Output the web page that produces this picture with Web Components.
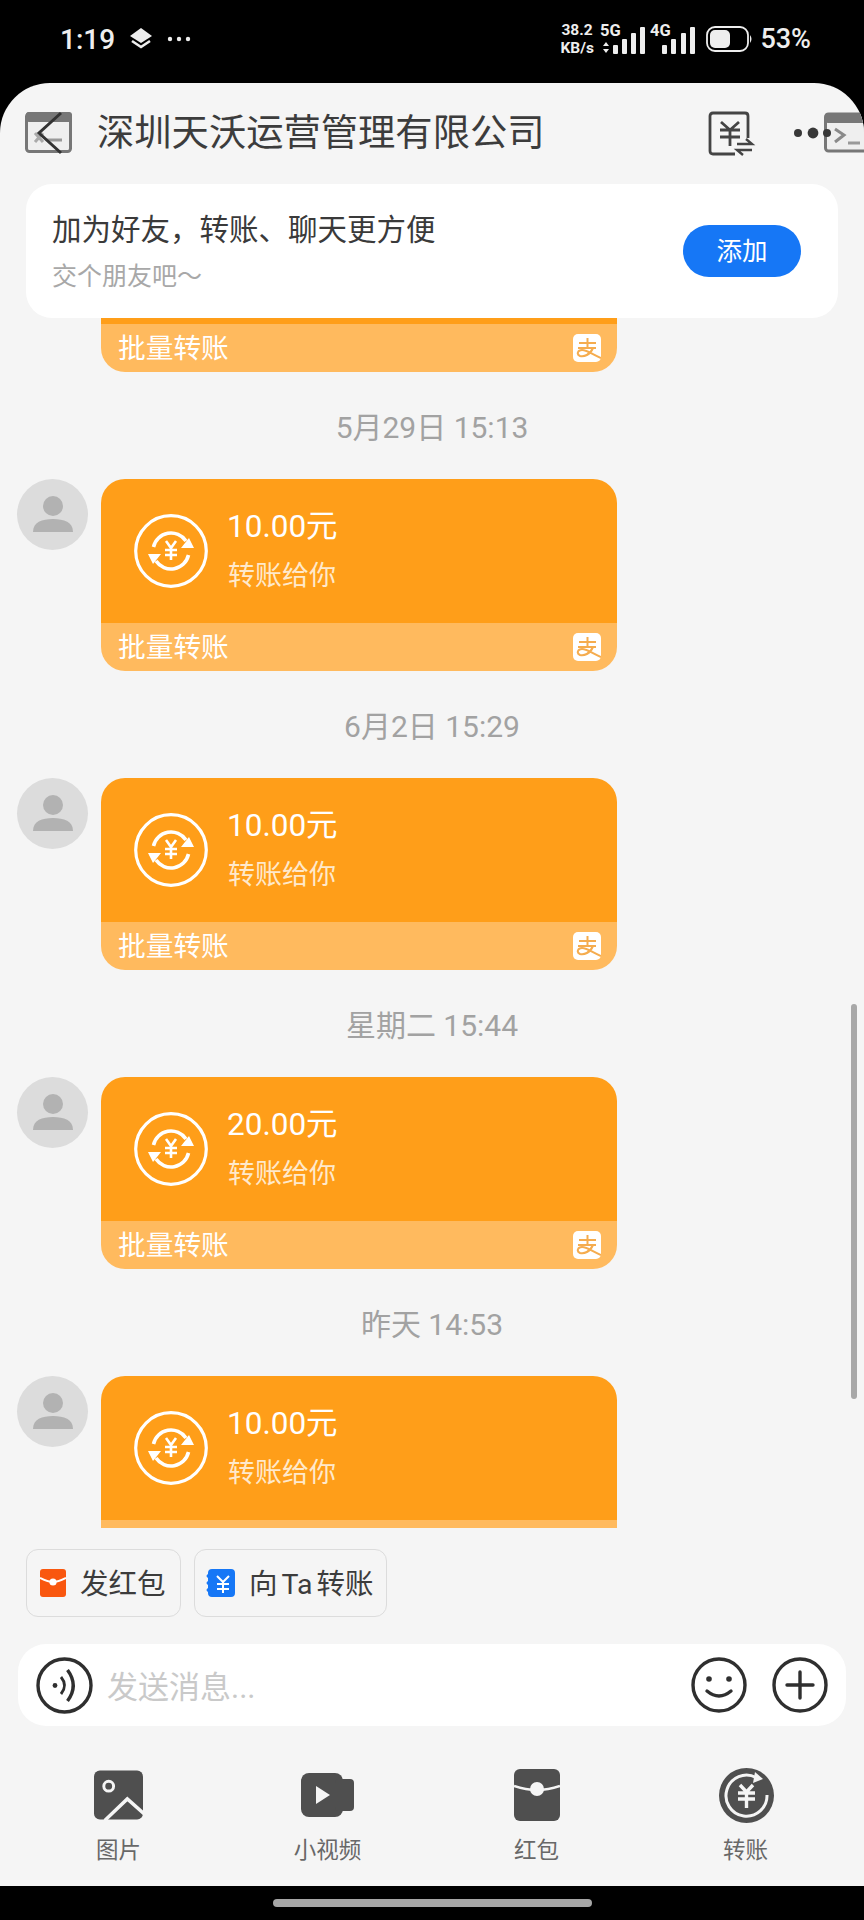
<!DOCTYPE html>
<html lang="zh"><head><meta charset="utf-8"><title>chat</title>
<style>
html,body{margin:0;padding:0;background:#000}
body{width:864px;height:1920px;overflow:hidden;font-family:Roboto,"Noto Sans CJK SC",sans-serif}
</style></head><body>
<phone-screen>
  <status-bar></status-bar>
  <chat-window>
    <chat-header title-text="深圳天沃运营管理有限公司"></chat-header>
    <friend-card></friend-card>
    <chat-list>
      <transfer-msg part="tail"></transfer-msg>
      <time-label>5月29日 15:13</time-label>
      <transfer-msg amount="10.00元"></transfer-msg>
      <time-label>6月2日 15:29</time-label>
      <transfer-msg amount="10.00元"></transfer-msg>
      <time-label>星期二 15:44</time-label>
      <transfer-msg amount="20.00元"></transfer-msg>
      <time-label>昨天 14:53</time-label>
      <transfer-msg part="head" amount="10.00元"></transfer-msg>
    </chat-list>
    <quick-chips></quick-chips>
    <input-bar></input-bar>
    <tool-tray></tool-tray>
  </chat-window>
  <home-bar></home-bar>
</phone-screen>
<script>
function def(name, html, init){
  customElements.define(name, class extends HTMLElement{
    constructor(){super();this.attachShadow({mode:'open'}).innerHTML=html;}
    connectedCallback(){ if(init) init(this,this.shadowRoot); }
  });
}
const FONT='Roboto,"Noto Sans CJK SC",sans-serif';
def('phone-screen',`<style>:host{display:flex;flex-direction:column;width:864px;height:1920px;background:#000;color:#333;font-family:${FONT}}</style><slot></slot>`);

def('status-bar',`<style>
:host{display:flex;align-items:center;height:83px;box-sizing:border-box;padding:0 53px 5px 60px;color:#eee;flex:none}
.t{font-size:28px;font-weight:500;width:69px}
.sp{flex:1}
.net{display:grid;font-size:15.500px;font-weight:700;line-height:15px;width:39px;text-align:left}
svg{display:block}
.pc{font-size:27px;font-weight:500;margin-left:7px}
</style>
<span class="t">1:19</span>
<svg width="24" height="24" viewBox="0 0 24 24"><path d="M12 1 23 9 12 16 1 9Z" fill="#eee"/><path d="M3 14 12 20 21 14" fill="none" stroke="#eee" stroke-width="2.600"/></svg>
<svg width="26" height="8" viewBox="0 0 26 8" style="margin-left:13px"><circle cx="4" cy="4" r="2.200" fill="#eee"/><circle cx="13" cy="4" r="2.200" fill="#eee"/><circle cx="22" cy="4" r="2.200" fill="#eee"/></svg>
<span class="sp"></span>
<span class="net"><span>38.2</span><span style="margin-top:3px;margin-left:-1px">KB/s</span></span>
<svg width="96" height="38" viewBox="0 -6 96 38" style="margin-top:-4px"><text x="0" y="12" font-size="16.500" font-weight="700" fill="#eee" font-family="Roboto">5G</text>
<path d="M3 22 6 18 9 22ZM3 25 6 29 9 25Z" fill="#eee"/>
<g fill="#eee"><rect x="13" y="21" width="5" height="9" rx="1"/><rect x="22" y="15" width="5" height="15" rx="1"/><rect x="31" y="9" width="5" height="21" rx="1"/><rect x="40" y="3" width="5" height="27" rx="1"/>
<rect x="62" y="21" width="5" height="9" rx="1"/><rect x="71" y="15" width="5" height="15" rx="1"/><rect x="81" y="9" width="5" height="21" rx="1"/><rect x="90" y="3" width="5" height="27" rx="1"/></g>
<text x="50" y="12" font-size="16.500" font-weight="700" fill="#eee" font-family="Roboto">4G</text></svg>
<svg width="47" height="26" viewBox="0 0 47 26" style="margin-left:10px"><rect x="1" y="1" width="41" height="24" rx="8" fill="none" stroke="#eee" stroke-width="1.800"/><rect x="4" y="4" width="20" height="18" rx="5" fill="#eee"/><path d="M44 9q3 4 0 8Z" fill="#eee"/></svg>
<span class="pc">53%</span>`);

def('chat-window',`<style>:host{display:flex;flex-direction:column;position:relative;height:1803px;flex:none;background:#f5f5f5;border-radius:50px 50px 0 0;overflow:hidden}
.bar{position:absolute;right:7px;top:921px;width:6px;height:395px;border-radius:3px;background:#a8a8a8}</style><slot></slot><div class="bar"></div>`);

def('chat-header',`<style>
:host{display:flex;align-items:center;height:101px;flex:none;position:relative;box-sizing:border-box;padding:0 0 0 25px}
h1{margin:0 0 0 24px;font-size:37.300px;font-weight:400;color:#3c3c3c;line-height:1;flex:1;white-space:nowrap}
svg{display:block;flex:none}
.rc{position:absolute;left:708px;top:28px}
.term{position:absolute;left:824px;top:29px}
.dots{position:absolute;left:792px;top:42px}
</style>
<svg width="48" height="44" viewBox="0 0 48 44" style="margin-top:-1px">
<rect x="1.500" y="2.500" width="44" height="38" rx="3" fill="#efefef" stroke="#777" stroke-width="3"/><rect x="1" y="1" width="46" height="10" rx="3" fill="#777"/>
<path d="M10 22 18 31M18 22 10 31" stroke="#aaa" stroke-width="3"/><path d="M22 29H37" stroke="#999" stroke-width="3"/>
<path d="M36 2 14 22 36 42" fill="none" stroke="#333" stroke-width="3"/></svg>
<h1></h1>
<svg class="rc" width="48" height="48" viewBox="0 0 48 48">
<path d="M27 43H5Q2 43 2 40V5Q2 2 5 2H37Q40 2 40 5V27" fill="none" stroke="#444" stroke-width="2.800"/>
<path d="M13 11 22 19 31 11M12 19H32M12 26H32M22 19V35" fill="none" stroke="#444" stroke-width="2.800"/>
<path d="M29 33H44L38 28M44 39H29L35 44" fill="none" stroke="#444" stroke-width="2.400"/></svg>
<svg class="term" width="40" height="41" viewBox="0 0 40 41"><rect x="1.500" y="2" width="50" height="37" rx="3" fill="#efefef" stroke="#777" stroke-width="3"/><rect x="1" y="1" width="50" height="10" rx="3" fill="#777"/><path d="M11 17 20 23 11 30" fill="none" stroke="#8a8a8a" stroke-width="3"/><path d="M24 31H36" stroke="#999" stroke-width="3"/></svg>
<svg class="dots" width="42" height="16" viewBox="0 0 42 16"><circle cx="6" cy="8" r="4" fill="#383838"/><circle cx="21" cy="8" r="5.400" fill="#383838"/><circle cx="35" cy="8" r="4" fill="#383838"/></svg>`,
(el,s)=>{s.querySelector('h1').textContent=el.getAttribute('title-text')});

def('friend-card',`<style>
:host{display:flex;align-items:center;height:134px;flex:none;box-sizing:border-box;margin:0 26px;padding:0 37px 0 26px;background:#fff;border-radius:26px}
.c{flex:1;display:flex;flex-direction:column;padding-top:2px}
.a{font-size:29.500px;line-height:40px;color:#3a3a3a}
.b{font-size:25px;line-height:34px;color:#a8a8a8;margin-top:10px}
.btn{width:118px;height:52px;border-radius:26px;background:#1677f6;color:#fff;font-size:25.500px;line-height:52px;display:flex;justify-content:center;box-sizing:border-box}
</style><div class="c"><span class="a">加为好友，转账、聊天更方便</span><span class="b">交个朋友吧～</span></div><div class="btn">添加</div>`);

def('chat-list',`<style>:host{display:flex;flex-direction:column;height:1211px;flex:none;overflow:hidden}</style><slot></slot>`);

def('time-label',`<style>:host{display:flex;justify-content:center;align-items:center;height:107px;box-sizing:border-box;font-size:30px;color:#a2a2a2;flex:none;padding-bottom:2px}</style><slot></slot>`);

const ZHI=`<svg width="28" height="28" viewBox="0 0 28 28"><rect width="28" height="28" rx="5" fill="#fff"/>
<path d="M6 9H23M14.500 4V14M5 14H23" fill="none" stroke="#f5ac4e" stroke-width="2"/>
<path d="M20 14C17 21 11 23 7 22 3 20 5 16 9 16 14 16 19 20 28 24" fill="none" stroke="#f5ac4e" stroke-width="2"/></svg>`;
const COIN=`<svg width="74" height="74" viewBox="0 0 74 74"><circle cx="37" cy="37" r="35.300" fill="none" stroke="#fff" stroke-width="3.200"/>
<path d="M19.500 33A18 18 0 0 1 52 27M54.500 41A18 18 0 0 1 22 47" fill="none" stroke="#fff" stroke-width="3.600"/>
<path d="M47 34H60L55 24ZM27 40H14L19 50Z" fill="#fff"/>
<path d="M32 27 37 34 42 27M31 36H43M31 41H43M37 34V46" fill="none" stroke="#fff" stroke-width="2.600"/></svg>`;
def('transfer-msg',`<style>
:host{display:flex;flex:none;padding-left:17px}
.av{width:71px;height:71px;border-radius:50%;background:#dcdcdc;flex:none;display:flex;align-items:center;justify-content:center}
.gap{width:71px;flex:none}
.bub{margin-left:13px;width:516px;border-radius:24px;overflow:hidden;display:flex;flex-direction:column;color:#fff}
.top{height:144px;background:#ff9e19;display:flex;align-items:center;padding-left:33px;box-sizing:border-box}
.tx{margin-left:20px;display:flex;flex-direction:column;align-self:flex-start;padding-top:28px}
.am{font-size:31.500px;line-height:40px;margin-left:-1px}
.su{font-size:27px;line-height:36px;margin-top:11px;color:#ffe9cb}
.ft{height:48px;background:#ffba5e;display:flex;align-items:center;justify-content:space-between;padding:0 16px 0 17px;font-size:27.700px}
.ft span{margin-top:-4px}
svg{display:block}
</style>
<div class="av"><svg width="42" height="42" viewBox="0 0 42 42"><circle cx="21" cy="12" r="10" fill="#b2b2b2"/><path d="M1 38C1 28 10 25 21 25S41 28 41 38Z" fill="#b2b2b2"/></svg></div>
<div class="bub"><div class="top">${COIN}<div class="tx"><span class="am"></span><span class="su">转账给你</span></div></div>
<div class="ft"><span>批量转账</span>${ZHI}</div></div>`,
(el,s)=>{
 const p=el.getAttribute('part');
 const top=s.querySelector('.top'),ft=s.querySelector('.ft'),bub=s.querySelector('.bub');
 s.querySelector('.am').textContent=el.getAttribute('amount')||'';
 if(p==='tail'){ // only the foot of this bubble has scrolled into view
   s.querySelector('.av').className='gap'; s.querySelector('.gap').innerHTML='';
   top.innerHTML=''; top.style.height='6px';
   bub.style.borderRadius='0 0 24px 24px';
 }
 if(p==='head'){ // the foot of this bubble is still below the fold
   ft.innerHTML=''; ft.style.height='8px';
   bub.style.borderRadius='24px 24px 0 0';
 }
});

def('quick-chips',`<style>
:host{display:flex;gap:13px;height:115px;flex:none;box-sizing:border-box;padding:20px 0 0 26px}
.c{height:68px;box-sizing:border-box;border:1.500px solid #dcdcdc;border-radius:12px;display:flex;align-items:center;padding:0 0 3px 13px;font-size:28.500px;color:#3c3c3c;gap:14px}
svg{display:block;flex:none;margin-top:3px}
</style>
<div class="c" style="width:155px"><svg width="26" height="28" viewBox="0 0 26 28"><rect width="26" height="28" rx="3" fill="#f9570f"/><path d="M0 9Q8 13 13 13T26 9" fill="none" stroke="#fff" stroke-width="2"/><circle cx="13" cy="13" r="3.600" fill="#fff"/></svg><span>发红包</span></div>
<div class="c" style="width:193px;padding-left:10px;gap:14px"><svg width="30" height="28" viewBox="0 0 30 28"><path d="M7 0H26Q30 0 30 4V24Q30 28 26 28H7Q3 28 3 24V23Q0 21 3 19V16Q0 14 3 12V9Q0 7 3 5V4Q3 0 7 0Z" fill="#1677f6"/><path d="M12 7 18 13 24 7M12 15H24M12 20H24M18 13V24" fill="none" stroke="#fff" stroke-width="2"/></svg><span style="white-space:nowrap;word-spacing:-3px">向 Ta 转账</span></div>`);

def('input-bar',`<style>
:host{display:flex;align-items:center;flex:none;height:82px;margin:0 18px;padding:0 18px 0 18px;box-sizing:border-box;background:#fff;border-radius:28px}
svg{display:block;flex:none}
span{flex:1;margin-left:14px;font-size:31px;color:#c9c9c9;padding-bottom:2px}
</style>
<svg width="57" height="57" viewBox="0 0 57 57"><circle cx="28.500" cy="28.500" r="26.500" fill="none" stroke="#2f2f2f" stroke-width="3.400"/><circle cx="19" cy="28.500" r="2.400" fill="#2f2f2f"/><path d="M25 20Q32 28.500 25 37" fill="none" stroke="#2f2f2f" stroke-width="2.800"/><path d="M31.500 13Q43 28.500 31.500 44" fill="none" stroke="#2f2f2f" stroke-width="3.400"/></svg>
<span>发送消息...</span>
<svg width="56" height="56" viewBox="0 0 56 56"><circle cx="28" cy="28" r="26" fill="none" stroke="#2f2f2f" stroke-width="3.400"/><circle cx="18" cy="22" r="2.800" fill="#2f2f2f"/><circle cx="38" cy="22" r="2.800" fill="#2f2f2f"/><path d="M16 34Q28 44 40 34" fill="none" stroke="#2f2f2f" stroke-width="3.400" stroke-linecap="round"/></svg>
<svg width="56" height="56" viewBox="0 0 56 56" style="margin-left:25px"><circle cx="28" cy="28" r="26" fill="none" stroke="#2f2f2f" stroke-width="3.400"/><path d="M15 28H41M28 15V41" stroke="#2f2f2f" stroke-width="3.400" stroke-linecap="round"/></svg>`);

def('tool-tray',`<style>
:host{display:grid;grid-template-columns:repeat(4,209px);flex:none;padding:41px 0 0 14px}
.i{display:flex;flex-direction:column;align-items:center;font-size:22.500px;color:#686868}
.g{height:56px;display:flex;align-items:center}
.i span{margin-top:11px;line-height:32px}
svg{display:block}
</style>
<div class="i"><div class="g"><svg width="49" height="50" viewBox="0 0 50 50"><rect width="50" height="50" rx="6" fill="#4f4f4f"/><circle cx="15" cy="16" r="5" fill="none" stroke="#f5f5f5" stroke-width="3"/><path d="M11 51 34 29 51 44" fill="none" stroke="#f5f5f5" stroke-width="3.500"/></svg></div><span>图片</span></div>
<div class="i"><div class="g"><svg width="53" height="44" viewBox="0 0 53 44"><rect width="42" height="44" rx="8" fill="#4f4f4f"/><rect x="34" y="6" width="19" height="32" rx="4" fill="#4f4f4f"/><path d="M15 13 29 22 15 31Z" fill="#f5f5f5"/></svg></div><span>小视频</span></div>
<div class="i"><div class="g"><svg width="46" height="52" viewBox="0 0 46 52"><rect width="46" height="52" rx="6" fill="#4f4f4f"/><path d="M0 17Q12 21 23 21T46 17" fill="none" stroke="#f5f5f5" stroke-width="2.500"/><circle cx="23" cy="20" r="7" fill="#f5f5f5"/></svg></div><span>红包</span></div>
<div class="i"><div class="g"><svg width="55" height="55" viewBox="0 0 55 55" style="margin-left:1px"><circle cx="27.500" cy="27.500" r="27.500" fill="#4f4f4f"/><path d="M37 9.500A20.500 20.500 0 1 0 48 27" fill="none" stroke="#f5f5f5" stroke-width="3"/><path d="M36 4 44 11 34 15Z" fill="#f5f5f5"/><path d="M21 17 27.500 24 34 17M19 25H36M19 31H36M27.500 24V40" fill="none" stroke="#f5f5f5" stroke-width="3.400"/></svg></div><span>转账</span></div>`);

def('home-bar',`<style>:host{display:flex;justify-content:center;flex:none;padding-top:13px}
i{display:block;width:319px;height:8px;border-radius:4px;background:#a6a6a6}</style><i></i>`);
</script>
</body></html>
